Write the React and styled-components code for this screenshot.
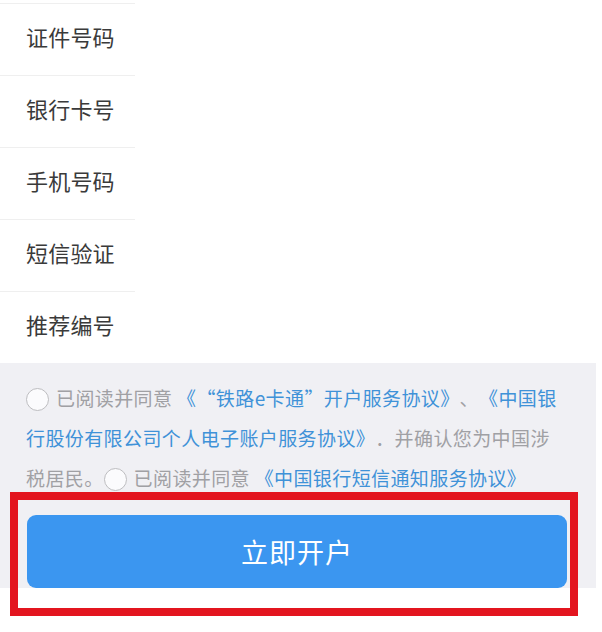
import React from "react";
import styled, { createGlobalStyle } from "styled-components";

const GlobalStyle = createGlobalStyle`
  html, body {
    margin: 0;
    padding: 0;
    background: #ffffff;
  }
  body {
    font-family: "Noto Sans CJK SC", "Noto Sans", sans-serif;
    text-spacing-trim: space-all;
  }
`;

const fields = ["证件号码", "银行卡号", "手机号码", "短信验证", "推荐编号"];

const App = () => (
  <Page>
    <GlobalStyle />
    <Form>
      {fields.map(label => (
        <Row key={label}>
          <Label>{label}</Label>
        </Row>
      ))}
    </Form>
    <Footer>
      <Agreement>
        <Radio />
        已阅读并同意 <Link>《“铁路e卡通”开户服务协议》</Link>、
        <Link>《中国银行股份有限公司个人电子账户服务协议》</Link>．并确认您为中国涉税居民。
        <Radio />
        已阅读并同意 <Link>《中国银行短信通知服务协议》</Link>
      </Agreement>
      <SubmitButton>立即开户</SubmitButton>
    </Footer>
    <Highlight />
  </Page>
);

const Page = styled.div`
  position: relative;
  width: 602px;
  height: 632px;
  background: #ffffff;
  overflow: hidden;
`;

const Form = styled.div`
  padding-top: 3px;
  display: flex;
  flex-direction: column;
`;

const Row = styled.div`
  width: 135px;
  height: 72px;
  box-sizing: border-box;
  border-top: 1.5px solid #efefef;
  display: flex;
  align-items: center;
  padding: 0 0 7px 26px;
`;

const Label = styled.span`
  font-size: 22px;
  color: #3a3a3a;
  white-space: nowrap;
  letter-spacing: 0.2px;
`;

const Footer = styled.div`
  width: 596px;
  background: #f0f0f4;
  padding: 15px 0 0;
  display: flex;
  flex-direction: column;
`;

const Agreement = styled.p`
  margin: 0;
  padding: 0 34px 0 26px;
  font-size: 19px;
  line-height: 40px;
  letter-spacing: 0.4px;
  color: #a0a0a4;
  text-spacing-trim: space-all;
`;

const Radio = styled.span`
  display: inline-block;
  width: 23px;
  height: 23px;
  box-sizing: border-box;
  border: 1.5px solid #bdbdc0;
  border-radius: 50%;
  vertical-align: -5px;
  margin-right: 7px;
  background: #fbfbfd;
`;

const Link = styled.span`
  color: #3f92d8;
`;

const SubmitButton = styled.button`
  margin: 17px 0 0 27px;
  width: 540px;
  height: 73px;
  border: none;
  border-radius: 9px;
  background: #3b96f0;
  color: #ffffff;
  font-family: "Noto Sans CJK SC", "Noto Sans", sans-serif;
  font-size: 27px;
  letter-spacing: 1px;
`;

const Highlight = styled.div`
  position: absolute;
  left: 10px;
  top: 492px;
  width: 568px;
  height: 124px;
  box-sizing: border-box;
  border: 8px solid #e3151f;
  pointer-events: none;
`;

export default App;
